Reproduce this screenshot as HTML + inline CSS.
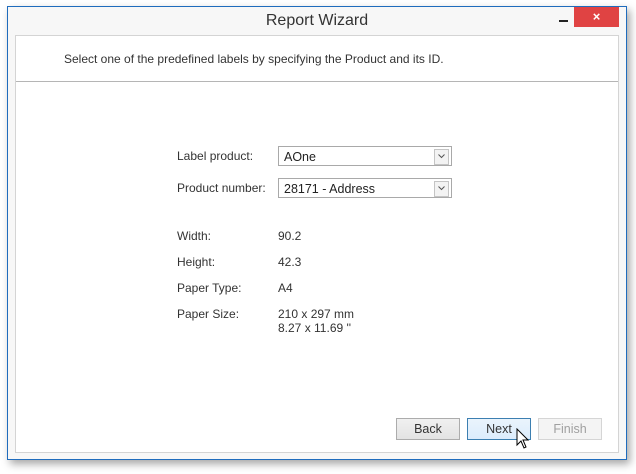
<!DOCTYPE html>
<html><head><style>
body{margin:0;width:636px;height:474px;background:#fff;position:relative;font-family:"Segoe UI","Liberation Sans",sans-serif;overflow:hidden}
.win{position:absolute;left:7px;top:6px;width:618px;height:452px;border:1px solid #1f6cbd;background:#f7f7f7;box-shadow:3px 4px 8px rgba(0,0,0,.35)}
.title{position:absolute;left:0;right:0;top:5px;text-align:center;font-size:16px;color:#333}
.close{position:absolute;left:566px;top:0;width:45px;height:20px;background:#e04343;color:#fff;text-align:center;font-size:13px;font-weight:bold;line-height:19px}
.min{position:absolute;left:551px;top:13px;width:9px;height:2px;background:#222}
.panel{position:absolute;left:7px;top:28px;width:602px;height:416px;border:1px solid #d4d4d4;background:#fff}
.sep{position:absolute;left:0;right:0;top:45px;border-top:1px solid #b5b5b5}
.t{position:absolute;font-size:12px;color:#333;white-space:nowrap}
.cb{position:absolute;width:174px;height:20px;border:1px solid #a9a9a9;background:#fff;font-size:12.5px;color:#222;line-height:20px;box-sizing:border-box;padding-left:5px}
.cb span{position:absolute;right:2px;top:2px;width:13px;height:14px;border:1px solid #c4c4c4;background:#f3f3f3}
.cb span svg{position:absolute;left:3px;top:4px}
.btn{position:absolute;top:418px;width:64px;height:22px;box-sizing:border-box;border:1px solid #acacac;background:linear-gradient(#f0f0f0,#e3e3e3);font-size:12.5px;text-align:center;line-height:20px;color:#333}
</style></head><body>
<div class="win">
<div class="title">Report Wizard</div>
<div class="min"></div><div class="close">×</div>
<div class="panel"><div class="sep"></div></div>
</div>
<div class="t" style="left:64px;top:52px;font-size:12px">Select one of the predefined labels by specifying the Product and its ID.</div>
<div class="t" style="left:177px;top:149px">Label product:</div>
<div class="cb" style="left:278px;top:146px">AOne<span><svg width="7" height="5"><path d="M0.5 0.5 L3.5 3.5 L6.5 0.5" fill="none" stroke="#555"/></svg></span></div>
<div class="t" style="left:177px;top:181px">Product number:</div>
<div class="cb" style="left:278px;top:178px">28171 - Address<span><svg width="7" height="5"><path d="M0.5 0.5 L3.5 3.5 L6.5 0.5" fill="none" stroke="#555"/></svg></span></div>
<div class="t" style="left:177px;top:229px">Width:</div><div class="t" style="left:278px;top:229px">90.2</div>
<div class="t" style="left:177px;top:255px">Height:</div><div class="t" style="left:278px;top:255px">42.3</div>
<div class="t" style="left:177px;top:281px">Paper Type:</div><div class="t" style="left:278px;top:281px">A4</div>
<div class="t" style="left:177px;top:307px">Paper Size:</div><div class="t" style="left:278px;top:307px">210 x 297 mm</div>
<div class="t" style="left:278px;top:321px">8.27 x 11.69 ''</div>
<div class="btn" style="left:396px">Back</div>
<div class="btn" style="left:467px;border-color:#3c7fb1;background:linear-gradient(#eaf4fc,#dcecfc)">Next</div>
<div class="btn" style="left:538px;border-color:#d5d5d5;background:#f4f4f4;color:#a0a0a0">Finish</div>
<svg style="position:absolute;left:516px;top:428px" width="14" height="22" viewBox="0 0 14 22"><path d="M1 1 L1 17 L5 13 L8 20 L10 19 L7 12 L12 12 Z" fill="#fff" stroke="#000" stroke-width="1"/></svg>
</body></html>
